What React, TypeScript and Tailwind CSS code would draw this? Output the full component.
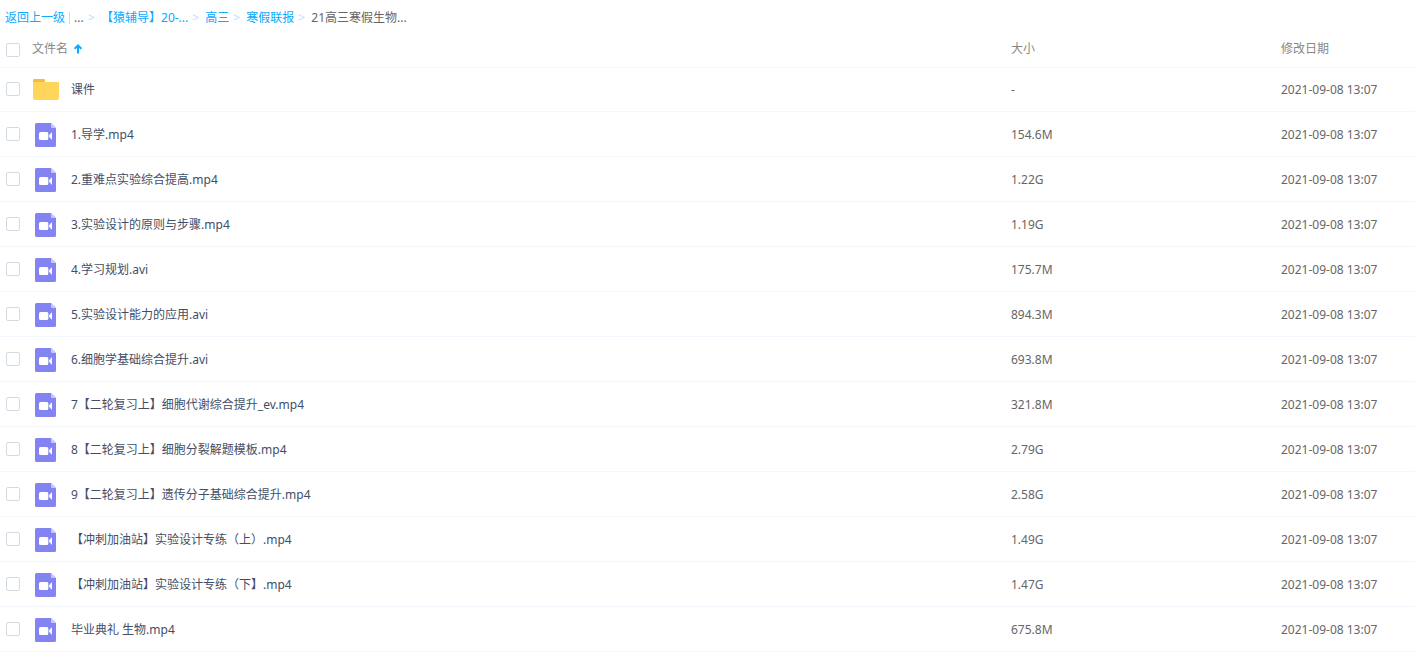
import { clsx } from "clsx"

type FileItem = {
    name: string
    size: string
    date: string
    isFolder?: boolean
}

const files: FileItem[] = [
    { name: "课件", size: "-", date: "2021-09-08 13:07", isFolder: true },
    { name: "1.导学.mp4", size: "154.6M", date: "2021-09-08 13:07" },
    { name: "2.重难点实验综合提高.mp4", size: "1.22G", date: "2021-09-08 13:07" },
    { name: "3.实验设计的原则与步骤.mp4", size: "1.19G", date: "2021-09-08 13:07" },
    { name: "4.学习规划.avi", size: "175.7M", date: "2021-09-08 13:07" },
    { name: "5.实验设计能力的应用.avi", size: "894.3M", date: "2021-09-08 13:07" },
    { name: "6.细胞学基础综合提升.avi", size: "693.8M", date: "2021-09-08 13:07" },
    { name: "7【二轮复习上】细胞代谢综合提升_ev.mp4", size: "321.8M", date: "2021-09-08 13:07" },
    { name: "8【二轮复习上】细胞分裂解题模板.mp4", size: "2.79G", date: "2021-09-08 13:07" },
    { name: "9【二轮复习上】遗传分子基础综合提升.mp4", size: "2.58G", date: "2021-09-08 13:07" },
    { name: "【冲刺加油站】实验设计专练（上）.mp4", size: "1.49G", date: "2021-09-08 13:07" },
    { name: "【冲刺加油站】实验设计专练（下】.mp4", size: "1.47G", date: "2021-09-08 13:07" },
    { name: "毕业典礼 生物.mp4", size: "675.8M", date: "2021-09-08 13:07" },
]

function FolderIcon() {
    return (
        <svg width="26" height="21" viewBox="0 0 26 21" aria-hidden="true">
            <path d="M0 1a1 1 0 0 1 1-1h10a1 1 0 0 1 1 1v4H0z" fill="#eebe49" />
            <path d="M0 3h25a1 1 0 0 1 1 1v15a2 2 0 0 1-2 2H2a2 2 0 0 1-2-2z" fill="#ffd659" />
        </svg>
    )
}

function VideoIcon() {
    return (
        <svg width="21" height="24" viewBox="0 0 21 24" aria-hidden="true">
            <path d="M1.5 0H16l5 5v17.5a1.5 1.5 0 0 1-1.5 1.5h-18A1.5 1.5 0 0 1 0 22.5v-21A1.5 1.5 0 0 1 1.5 0z" fill="#8384f1" />
            <path d="M16 0l5 5h-4a1 1 0 0 1-1-1z" fill="#c7c7fa" />
            <rect x="4" y="9" width="9.3" height="8" rx="1.5" fill="#fff" />
            <path d="M13.7 13l2.5-3.2q.8-.6.8.4v5.6q0 1-.8.4z" fill="#fff" />
        </svg>
    )
}

function SortArrow() {
    return (
        <svg width="8" height="10" viewBox="0 0 8 10" fill="none" stroke="#09aaff" strokeWidth="2" aria-hidden="true">
            <path d="M4 9.5V1.5M.6 4.8L4 1.5l3.4 3.3" />
        </svg>
    )
}

function Checkbox({ label }: { label: string }) {
    return (
        <input
            type="checkbox"
            aria-label={label}
            className="block size-3.5 appearance-none rounded-xs border border-[#d4dae4] bg-white checked:border-[#09aaff] checked:bg-[#09aaff]"
        />
    )
}

function Separator() {
    return <span className="w-[9px] text-[#c4dbfe]">&gt;</span>
}

function Breadcrumb() {
    return (
        <nav aria-label="路径" className="flex h-9 items-center gap-1 pl-[5px] whitespace-nowrap text-[#09aaff]">
            <a href="#">返回上一级</a>
            <span className="h-3 w-px bg-[#c4dbfe]" />
            <span className="w-2.5 text-[#666666]">...</span>
            <Separator />
            <a href="#">【猿辅导】20-...</a>
            <Separator />
            <a href="#">高三</a>
            <Separator />
            <a href="#">寒假联报</a>
            <Separator />
            <span className="text-[#666666]">21高三寒假生物...</span>
        </nav>
    )
}

export default function App() {
    return (
        <main className="bg-white font-['Noto_Sans','Noto_Sans_CJK_SC',sans-serif] text-xs text-[#666666]">
            <Breadcrumb />
            <table className="w-full table-fixed border-collapse text-left">
                <colgroup>
                    <col className="w-8" />
                    <col />
                    <col className="w-[270px]" />
                    <col className="w-[134px]" />
                </colgroup>
                <thead>
                    <tr className="h-[31px] border-b border-[#f2f6fd] text-[#888888]">
                        <th className="pb-0.5 pl-1.5">
                            <Checkbox label="全选" />
                        </th>
                        <th className="pb-1 font-normal">
                            <button className="flex items-center gap-1.5">
                                文件名
                                <SortArrow />
                            </button>
                        </th>
                        <th className="pb-1 font-normal">大小</th>
                        <th className="pb-1 font-normal">修改日期</th>
                    </tr>
                </thead>
                <tbody>
                    {files.map((file) => (
                        <tr key={file.name} className={clsx("border-b border-[#f2f6fd]", file.isFolder ? "h-11" : "h-[45px]")}>
                            <td className="pl-1.5">
                                <Checkbox label={file.name} />
                            </td>
                            <td className="pt-0.5">
                                <a href="#" className="flex items-center text-[#424e67]">
                                    <span className="flex w-[39px] shrink-0 pl-px">
                                        {file.isFolder ? (
                                            <span className="pb-0.5">
                                                <FolderIcon />
                                            </span>
                                        ) : (
                                            <span className="pl-0.5">
                                                <VideoIcon />
                                            </span>
                                        )}
                                    </span>
                                    <span className="truncate">{file.name}</span>
                                </a>
                            </td>
                            <td className="pt-0.5">{file.size}</td>
                            <td className="pt-0.5">{file.date}</td>
                        </tr>
                    ))}
                </tbody>
            </table>
        </main>
    )
}
